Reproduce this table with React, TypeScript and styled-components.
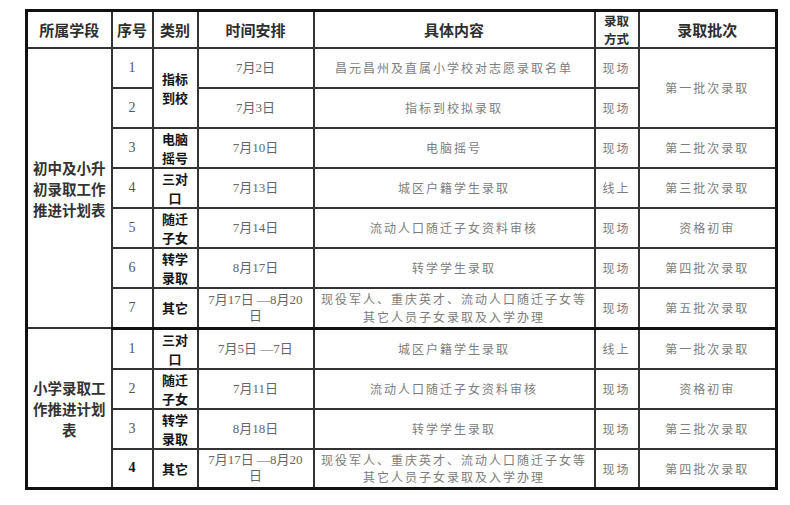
import React from "react";
import styled, { createGlobalStyle, css } from "styled-components";

const GlobalStyle = createGlobalStyle`
  html, body {
    margin: 0;
    padding: 0;
    background: #ffffff;
    font-family: "Noto Sans CJK SC", "Noto Sans", sans-serif;
  }
`;

const Page = styled.div`
  padding: 9px 0 0 25px;
`;

const Table = styled.table`
  border-collapse: collapse;
  table-layout: fixed;
  width: 750px;
  border: 3px solid #111;
`;

const HeadCell = styled.th<{ $stacked?: boolean }>`
  height: 35px;
  padding: 0 2px;
  border: 2px solid #333;
  font-family: "Noto Sans CJK SC", sans-serif;
  font-size: ${(p) => (p.$stacked ? "12.5px" : "15px")};
  font-weight: 700;
  line-height: ${(p) => (p.$stacked ? "17.5px" : "18px")};
  color: #2e2e2e;
  text-align: center;
  vertical-align: middle;
`;

const Row = styled.tr<{ $end?: boolean }>`
  height: 40px;
  ${(p) =>
    p.$end &&
    css`
      & > td {
        border-bottom: 3px solid #111;
      }
    `}
`;

type Kind = "section" | "num" | "cat" | "date" | "text";

const Cell = styled.td<{ $kind: Kind; $strong?: boolean }>`
  border: 2px solid #333;
  padding: 0 3px;
  text-align: center;
  vertical-align: middle;
  ${(p) => {
    switch (p.$kind) {
      case "section":
        return css`
          font-family: "Noto Sans CJK SC", sans-serif;
          font-size: 14.5px;
          font-weight: 700;
          line-height: 21px;
          color: #333;
          padding: 0 1px;
        `;
      case "num":
        return css`
          font-family: "Liberation Serif", serif;
          font-size: 14px;
          font-weight: ${p.$strong ? 700 : 400};
          color: ${p.$strong ? "#111" : "#555"};
        `;
      case "cat":
        return css`
          font-family: "Noto Sans CJK SC", sans-serif;
          font-size: 13px;
          font-weight: 700;
          line-height: 19px;
          color: #151515;
        `;
      case "date":
        return css`
          font-family: "Liberation Serif", "Noto Sans CJK SC", serif;
          font-size: 13px;
          line-height: 16px;
          color: #666;
        `;
      default:
        return css`
          font-family: "Noto Sans CJK SC", sans-serif;
          font-size: 12px;
          letter-spacing: 2px;
          line-height: 17.5px;
          color: #7d7d7d;
        `;
    }
  }}
`;

const Lines: React.FC<{ lines: string[] }> = ({ lines }) => (
  <>
    {lines.map((l, i) => (
      <React.Fragment key={i}>
        {i > 0 && <br />}
        {l}
      </React.Fragment>
    ))}
  </>
);

type RowData = {
  num: string;
  strong?: boolean;
  cat?: string[];
  catSpan?: number;
  date: string[];
  content: string[];
  mode: string;
  batch?: string;
  batchSpan?: number;
};

type Section = { label: string[]; rows: RowData[] };

const other = ["现役军人、重庆英才、流动人口随迁子女等", "其它人员子女录取及入学办理"];

const sections: Section[] = [
  {
    label: ["初中及小升", "初录取工作", "推进计划表"],
    rows: [
      { num: "1", cat: ["指标", "到校"], catSpan: 2, date: ["7月2日"], content: ["昌元昌州及直属小学校对志愿录取名单"], mode: "现场", batch: "第一批次录取", batchSpan: 2 },
      { num: "2", date: ["7月3日"], content: ["指标到校拟录取"], mode: "现场" },
      { num: "3", cat: ["电脑", "摇号"], date: ["7月10日"], content: ["电脑摇号"], mode: "现场", batch: "第二批次录取" },
      { num: "4", cat: ["三对", "口"], date: ["7月13日"], content: ["城区户籍学生录取"], mode: "线上", batch: "第三批次录取" },
      { num: "5", cat: ["随迁", "子女"], date: ["7月14日"], content: ["流动人口随迁子女资料审核"], mode: "现场", batch: "资格初审" },
      { num: "6", cat: ["转学", "录取"], date: ["8月17日"], content: ["转学学生录取"], mode: "现场", batch: "第四批次录取" },
      { num: "7", cat: ["其它"], date: ["7月17日 —8月20", "日"], content: other, mode: "现场", batch: "第五批次录取" },
    ],
  },
  {
    label: ["小学录取工", "作推进计划", "表"],
    rows: [
      { num: "1", cat: ["三对", "口"], date: ["7月5日 —7日"], content: ["城区户籍学生录取"], mode: "线上", batch: "第一批次录取" },
      { num: "2", cat: ["随迁", "子女"], date: ["7月11日"], content: ["流动人口随迁子女资料审核"], mode: "现场", batch: "资格初审" },
      { num: "3", cat: ["转学", "录取"], date: ["8月18日"], content: ["转学学生录取"], mode: "现场", batch: "第三批次录取" },
      { num: "4", strong: true, cat: ["其它"], date: ["7月17日 —8月20", "日"], content: other, mode: "现场", batch: "第四批次录取" },
    ],
  },
];

const widths = [85, 41, 45, 116, 281, 44, 138];

export default function App() {
  return (
    <>
      <GlobalStyle />
      <Page>
        <Table>
          <colgroup>
            {widths.map((w, i) => (
              <col key={i} style={{ width: w }} />
            ))}
          </colgroup>
          <thead>
            <tr>
              <HeadCell>所属学段</HeadCell>
              <HeadCell>序号</HeadCell>
              <HeadCell>类别</HeadCell>
              <HeadCell>时间安排</HeadCell>
              <HeadCell>具体内容</HeadCell>
              <HeadCell $stacked>
                录取
                <br />
                方式
              </HeadCell>
              <HeadCell>录取批次</HeadCell>
            </tr>
          </thead>
          <tbody>
            {sections.map((sec, si) =>
              sec.rows.map((r, ri) => (
                <Row key={`${si}-${ri}`} $end={si === 0 && ri === sec.rows.length - 1}>
                  {ri === 0 && (
                    <Cell $kind="section" rowSpan={sec.rows.length}>
                      <Lines lines={sec.label} />
                    </Cell>
                  )}
                  <Cell $kind="num" $strong={r.strong}>
                    {r.num}
                  </Cell>
                  {r.cat && (
                    <Cell $kind="cat" rowSpan={r.catSpan ?? 1}>
                      <Lines lines={r.cat} />
                    </Cell>
                  )}
                  <Cell $kind="date">
                    <Lines lines={r.date} />
                  </Cell>
                  <Cell $kind="text">
                    <Lines lines={r.content} />
                  </Cell>
                  <Cell $kind="text">{r.mode}</Cell>
                  {r.batch && (
                    <Cell $kind="text" rowSpan={r.batchSpan ?? 1}>
                      {r.batch}
                    </Cell>
                  )}
                </Row>
              ))
            )}
          </tbody>
        </Table>
      </Page>
    </>
  );
}
